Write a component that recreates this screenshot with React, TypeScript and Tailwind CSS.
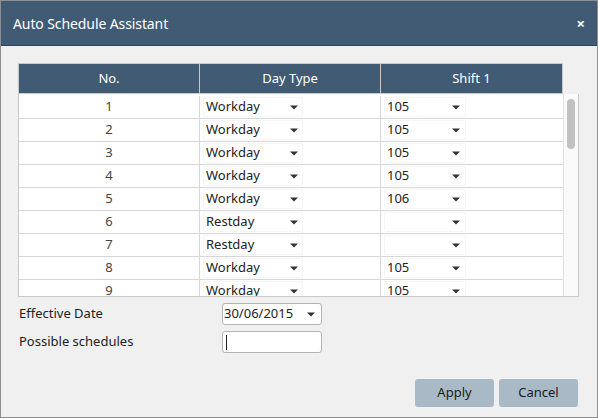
import type { FC, JSX } from "react";

type Row = { no: number; dayType: string; shift: string };

const rows: Row[] = [
    { no: 1, dayType: "Workday", shift: "105" },
    { no: 2, dayType: "Workday", shift: "105" },
    { no: 3, dayType: "Workday", shift: "105" },
    { no: 4, dayType: "Workday", shift: "105" },
    { no: 5, dayType: "Workday", shift: "106" },
    { no: 6, dayType: "Restday", shift: "" },
    { no: 7, dayType: "Restday", shift: "" },
    { no: 8, dayType: "Workday", shift: "105" },
    { no: 9, dayType: "Workday", shift: "105" },
];

const Caret: FC = (): JSX.Element => (
    <svg width="8" height="5" viewBox="0 0 8 5" className="shrink-0">
        <path d="M0 0.5h8L4 4.5z" fill="#333" />
    </svg>
);

const App: FC = (): JSX.Element => {
    return (
        <div className="w-[598px] h-[418px] flex flex-col bg-[#f0f0f0] border border-[#8e8e8e] text-[#222] font-['Noto_Sans','Open_Sans',sans-serif] overflow-hidden">
            <div className="h-[45px] shrink-0 bg-[#405b73] border-b border-[#2e4356] flex items-center justify-between pl-[12px] pr-[12px]">
                <h1 className="text-white text-[14px] tracking-[-0.1px]">Auto Schedule Assistant</h1>
                <span className="text-white text-[15px] font-bold leading-none">×</span>
            </div>

            <div className="flex flex-col px-[17px] pt-[17px]">
                <div className="w-[545px] h-[31px] flex bg-[#405b73] border border-[#c9c9c9] text-white text-[13px]">
                    <div className="w-[181px] flex items-center justify-center border-r border-[#c9c9c9]">No.</div>
                    <div className="w-[181px] flex items-center justify-center border-r border-[#c9c9c9]">Day Type</div>
                    <div className="flex-1 flex items-center justify-center">Shift 1</div>
                </div>

                <div className="w-[561px] h-[203px] flex border border-t-0 border-[#c9c9c9] bg-white overflow-hidden">
                    <div className="w-[544px] flex flex-col pt-[2px] text-[13px]">
                        {rows.map((row: Row) => (
                            <div key={row.no} className="h-[23px] shrink-0 flex border-b border-[#d6d6d6]">
                                <div className="w-[181px] flex items-center justify-center text-[#444] border-r border-[#d6d6d6]">{row.no}</div>
                                <div className="w-[181px] flex items-center pl-[3px] border-r border-[#d6d6d6]">
                                    <div className="w-[100px] h-[20px] flex items-center justify-between pl-[2px] pr-[4px] border border-[#f6f6f6] rounded-[2px]">
                                        <span>{row.dayType}</span>
                                        <Caret />
                                    </div>
                                </div>
                                <div className="flex-1 flex items-center pl-[3px]">
                                    <div className="w-[82px] h-[20px] flex items-center justify-between pl-[2px] pr-[5px] border border-[#f6f6f6] rounded-[2px]">
                                        <span>{row.shift}</span>
                                        <Caret />
                                    </div>
                                </div>
                            </div>
                        ))}
                    </div>
                    <div className="flex-1 bg-[#fafafa] border-l border-[#e2e2e2] pt-[5px] flex justify-center">
                        <div className="w-[8px] h-[50px] rounded-full bg-[#c1c1c1]" />
                    </div>
                </div>

                <div className="flex flex-col gap-[6px] mt-[6px] text-[13px]">
                    <div className="flex items-center">
                        <span className="w-[204px] pl-[1px]">Effective Date</span>
                        <div className="w-[100px] h-[22px] flex items-center justify-between pl-[1px] pr-[6px] bg-white border border-[#b4b4b4] rounded-[3px]">
                            <span>30/06/2015</span>
                            <Caret />
                        </div>
                    </div>
                    <div className="flex items-center">
                        <span className="w-[204px] pl-[1px]">Possible schedules</span>
                        <div className="w-[100px] h-[22px] flex items-center pl-[3px] bg-white border border-[#b4b4b4] rounded-[3px]">
                            <div className="w-[1px] h-[15px] bg-[#222]" />
                        </div>
                    </div>
                </div>

                <div className="flex justify-end gap-[5px] mt-[26px] pr-[2px]">
                    <button className="w-[79px] h-[28px] rounded-[3px] bg-[#a9bac6] text-[13px] text-[#1a1a1a]">Apply</button>
                    <button className="w-[79px] h-[28px] rounded-[3px] bg-[#a9bac6] text-[13px] text-[#1a1a1a]">Cancel</button>
                </div>
            </div>
        </div>
    );
};

export default App;
